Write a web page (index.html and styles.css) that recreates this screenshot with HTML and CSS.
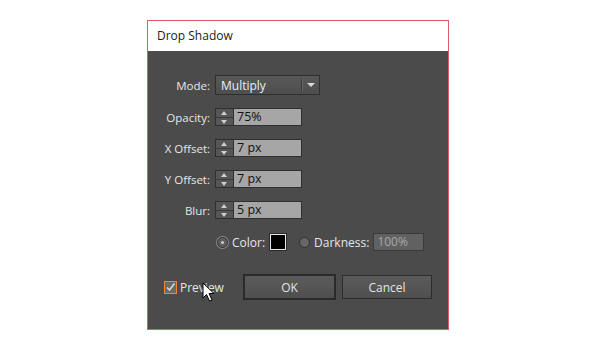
FILE: index.html
```html
<!DOCTYPE html>
<html lang="en">
<head>
    <meta charset="UTF-8">
    <title>Drop Shadow</title>
    <link rel="stylesheet" href="styles.css">
</head>
<body>
    <div class="dialog">
        <div class="titlebar">Drop Shadow</div>

        <div class="content">
            <div class="fields">
                <label class="label">Mode:</label>
                <div class="select">
                    <span class="select-value">Multiply</span>
                    <span class="select-arrow"></span>
                </div>

                <label class="label">Opacity:</label>
                <div class="spinner">
                    <span class="spin"><i class="up"></i><i class="down"></i></span>
                    <span class="spin-value">75%</span>
                </div>

                <label class="label">X Offset:</label>
                <div class="spinner">
                    <span class="spin"><i class="up"></i><i class="down"></i></span>
                    <span class="spin-value">7 px</span>
                </div>

                <label class="label">Y Offset:</label>
                <div class="spinner">
                    <span class="spin"><i class="up"></i><i class="down"></i></span>
                    <span class="spin-value">7 px</span>
                </div>

                <label class="label">Blur:</label>
                <div class="spinner">
                    <span class="spin"><i class="up"></i><i class="down"></i></span>
                    <span class="spin-value">5 px</span>
                </div>
            </div>

            <div class="color-row">
                <span class="radio checked"></span>
                <span class="radio-label">Color:</span>
                <span class="swatch"></span>
                <span class="radio"></span>
                <span class="radio-label">Darkness:</span>
                <span class="disabled-field">100%</span>
            </div>

            <div class="actions">
                <div class="preview">
                    <span class="checkbox">
                        <svg width="11" height="11" viewBox="0 0 11 11">
                            <path d="M2 5.5 L4.5 8 L9.5 1.5" fill="none" stroke="#d8d8d8" stroke-width="1.6"/>
                        </svg>
                    </span>
                    <span>Preview</span>
                </div>
                <button class="btn btn-default">OK</button>
                <button class="btn">Cancel</button>
            </div>
        </div>

        <!-- mouse pointer over the Preview checkbox -->
        <svg class="cursor" width="14" height="21" viewBox="0 0 14 21">
            <path d="M1 1 L1 16 L4.5 12.5 L7.5 19 L10 18 L7 11.5 L12 11.5 Z" fill="#fff" stroke="#000" stroke-width="1"/>
        </svg>
    </div>
</body>
</html>
```

FILE: styles.css
```css
body {
    margin: 0;
    background: #ffffff;
    font-family: "Open Sans", "Noto Sans", sans-serif;
    font-size: 11.5px;
}

.dialog {
    position: relative;
    width: 300px;
    margin: 20px 0 0 147px;
    border: 1px solid #e35b66;
    background: #4b4b4b;
}

.titlebar {
    height: 30px;
    line-height: 30px;
    padding-left: 9px;
    background: #ffffff;
    color: #1b1b1b;
    font-size: 12px;
}

.content {
    padding: 24px 16px 29px 16px;
    color: #e6e6e6;
}

.fields {
    display: grid;
    grid-template-columns: 46px 87px;
    column-gap: 5px;
    row-gap: 13px;
    align-items: center;
}

.label {
    text-align: right;
    white-space: nowrap;
}

.select {
    width: 103px;
    height: 18px;
    display: flex;
    align-items: center;
    border: 1px solid #2f2f2f;
    background: linear-gradient(#585858, #4e4e4e);
    box-sizing: content-box;
}

.select-value {
    flex: 1;
    padding-left: 5px;
    color: #e8eef7;
    font-size: 12px;
}

.select-arrow {
    width: 17px;
    height: 12px;
    border-left: 1px solid #3a3a3a;
    box-shadow: inset 1px 0 0 #666;
    position: relative;
}

.select-arrow::after {
    content: "";
    position: absolute;
    left: 5px;
    top: 4px;
    border-left: 4px solid transparent;
    border-right: 4px solid transparent;
    border-top: 4px solid #dcdcdc;
}

.spinner {
    display: flex;
    height: 18px;
    border: 1px solid #2f2f2f;
    box-sizing: border-box;
    width: 87px;
}

.spin {
    width: 17px;
    display: flex;
    flex-direction: column;
    background: #565656;
    border-right: 1px solid #2f2f2f;
}

.spin i {
    flex: 1;
    position: relative;
}

.spin .up {
    border-bottom: 1px solid #3a3a3a;
}

.spin i::after {
    content: "";
    position: absolute;
    left: 5px;
    border-left: 3.5px solid transparent;
    border-right: 3.5px solid transparent;
}

.spin .up::after {
    top: 2px;
    border-bottom: 4px solid #cfcfcf;
}

.spin .down::after {
    top: 2px;
    border-top: 4px solid #cfcfcf;
}

.spin-value {
    flex: 1;
    background: #a6a6a6;
    color: #111111;
    padding-left: 3px;
    line-height: 16px;
    font-size: 12.5px;
}

.color-row {
    display: flex;
    align-items: center;
    height: 18px;
    margin: 14px 0 0 53px;
}

.radio {
    width: 9px;
    height: 9px;
    border-radius: 50%;
    border: 1px solid #2e2e2e;
    background: #666666;
    position: relative;
}

.radio.checked {
    background: #5e5e5e;
    box-shadow: 0 0 0 1px #8a8a8a;
}

.radio.checked::after {
    content: "";
    position: absolute;
    left: 3px;
    top: 3px;
    width: 3px;
    height: 3px;
    border-radius: 50%;
    background: #d0d0d0;
}

.radio-label {
    margin: 0 4px 0 4px;
    font-size: 12px;
}

.swatch {
    width: 14px;
    height: 14px;
    background: #000;
    border: 1px solid #e8e8e8;
    outline: 1px solid #2a2a2a;
    margin: 0 13px 0 1px;
}

.disabled-field {
    width: 46px;
    height: 16px;
    line-height: 16px;
    padding-left: 3px;
    background: #616161;
    border: 1px solid #3a3a3a;
    color: #a8a8a8;
    font-size: 12px;
}

.actions {
    display: flex;
    align-items: center;
    margin-top: 23px;
}

.preview {
    display: flex;
    align-items: center;
    gap: 3px;
    width: 79px;
    font-size: 12px;
}

.checkbox {
    width: 11px;
    height: 11px;
    border: 1px solid #ec8a2a;
    background: #6a6a6a;
    display: flex;
}

.btn {
    width: 90px;
    height: 24px;
    padding: 0;
    margin-left: 6px;
    border: 1px solid #2c2c2c;
    background: linear-gradient(#5b5b5b, #4f4f4f);
    color: #e4e4e4;
    font-family: inherit;
    font-size: 12px;
}

.btn-default {
    width: 93px;
    height: 26px;
    margin-left: 0;
    border: 2px solid #2a2a2a;
}

.cursor {
    position: absolute;
    left: 54px;
    top: 261px;
}
```
